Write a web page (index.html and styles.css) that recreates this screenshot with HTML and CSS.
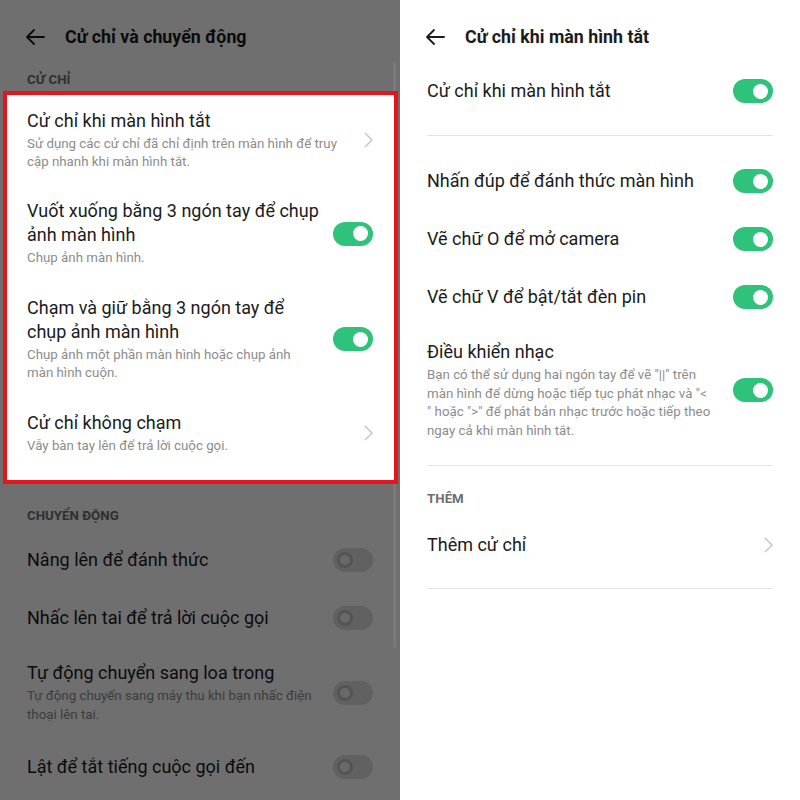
FILE: index.html
```html
<!DOCTYPE html>
<html lang="vi">
<head>
<meta charset="utf-8">
<title>Cử chỉ</title>
<link rel="stylesheet" href="styles.css">
</head>
<body>
<div class="screen">
  <section class="panel left">
    <div class="header">
      <svg class="back" width="20" height="20" viewBox="0 0 20 20"><path d="M19 10H2M9 3L2 10l7 7" fill="none" stroke="#1b1b1b" stroke-width="1.8" stroke-linecap="round" stroke-linejoin="round"/></svg>
      <h1>Cử chỉ và chuyển động</h1>
    </div>
    <div class="label top">CỬ CHỈ</div>
    <div class="box">
      <div class="row multi">
        <div class="text">
          <div class="title">Cử chỉ khi màn hình tắt</div>
          <div class="sub">Sử dụng các cử chỉ đã chỉ định trên màn hình để truy<br>cập nhanh khi màn hình tắt.</div>
        </div>
        <svg class="chev" width="9" height="16" viewBox="0 0 9 16"><path d="M1 1l7 7-7 7" fill="none" stroke="#c6c6c6" stroke-width="1.5"/></svg>
      </div>
      <div class="row multi">
        <div class="text">
          <div class="title">Vuốt xuống bằng 3 ngón tay để chụp<br>ảnh màn hình</div>
          <div class="sub">Chụp ảnh màn hình.</div>
        </div>
        <span class="toggle on"></span>
      </div>
      <div class="row multi">
        <div class="text">
          <div class="title">Chạm và giữ bằng 3 ngón tay để<br>chụp ảnh màn hình</div>
          <div class="sub">Chụp ảnh một phần màn hình hoặc chụp ảnh<br>màn hình cuộn.</div>
        </div>
        <span class="toggle on"></span>
      </div>
      <div class="row multi">
        <div class="text">
          <div class="title">Cử chỉ không chạm</div>
          <div class="sub">Vẫy bàn tay lên để trả lời cuộc gọi.</div>
        </div>
        <svg class="chev" width="9" height="16" viewBox="0 0 9 16"><path d="M1 1l7 7-7 7" fill="none" stroke="#c6c6c6" stroke-width="1.5"/></svg>
      </div>
    </div>
    <div class="label gap">CHUYỂN ĐỘNG</div>
    <div class="row single out">
      <div class="text"><div class="title">Nâng lên để đánh thức</div></div>
      <span class="toggle off"></span>
    </div>
    <div class="row single out">
      <div class="text"><div class="title">Nhấc lên tai để trả lời cuộc gọi</div></div>
      <span class="toggle off"></span>
    </div>
    <div class="row multi out">
      <div class="text">
        <div class="title">Tự động chuyển sang loa trong</div>
        <div class="sub">Tự động chuyển sang máy thu khi bạn nhấc điện<br>thoại lên tai.</div>
      </div>
      <span class="toggle off"></span>
    </div>
    <div class="row single out">
      <div class="text"><div class="title">Lật để tắt tiếng cuộc gọi đến</div></div>
      <span class="toggle off"></span>
    </div>
    <div class="dim"></div>
    <div class="scrollbar"></div>
  </section>

  <section class="panel right">
    <div class="header">
      <svg class="back" width="20" height="20" viewBox="0 0 20 20"><path d="M19 10H2M9 3L2 10l7 7" fill="none" stroke="#1b1b1b" stroke-width="1.8" stroke-linecap="round" stroke-linejoin="round"/></svg>
      <h1>Cử chỉ khi màn hình tắt</h1>
    </div>
    <div class="row single out first">
      <div class="text"><div class="title">Cử chỉ khi màn hình tắt</div></div>
      <span class="toggle on"></span>
    </div>
    <div class="divider d1"></div>
    <div class="row single out">
      <div class="text"><div class="title">Nhấn đúp để đánh thức màn hình</div></div>
      <span class="toggle on"></span>
    </div>
    <div class="row single out">
      <div class="text"><div class="title">Vẽ chữ O để mở camera</div></div>
      <span class="toggle on"></span>
    </div>
    <div class="row single out">
      <div class="text"><div class="title">Vẽ chữ V để bật/tắt đèn pin</div></div>
      <span class="toggle on"></span>
    </div>
    <div class="row multi out">
      <div class="text">
        <div class="title">Điều khiển nhạc</div>
        <div class="sub">Bạn có thể sử dụng hai ngón tay để vẽ "||" trên<br>màn hình để dừng hoặc tiếp tục phát nhạc và "&lt;<br>" hoặc "&gt;" để phát bản nhạc trước hoặc tiếp theo<br>ngay cả khi màn hình tắt.</div>
      </div>
      <span class="toggle on"></span>
    </div>
    <div class="divider d2"></div>
    <div class="label gap2">THÊM</div>
    <div class="row single out">
      <div class="text"><div class="title">Thêm cử chỉ</div></div>
      <svg class="chev" width="9" height="16" viewBox="0 0 9 16"><path d="M1 1l7 7-7 7" fill="none" stroke="#c6c6c6" stroke-width="1.5"/></svg>
    </div>
    <div class="divider d3"></div>
  </section>
</div>
</body>
</html>
```
FILE: styles.css
```css
html, body {
  margin: 0;
  padding: 0;
  background: #ffffff;
}
body {
  font-family: Roboto, "Noto Sans", "Liberation Sans", sans-serif;
  color: #1b1b1b;
}
.screen {
  display: flex;
  width: 800px;
  height: 800px;
  overflow: hidden;
}
.panel {
  width: 400px;
  height: 800px;
  flex: none;
  position: relative;
  background: #ffffff;
  display: flex;
  flex-direction: column;
}
.header {
  display: flex;
  align-items: center;
  height: 54px;
  margin-top: 10px;
  padding-left: 25px;
  flex: none;
}
.back {
  flex: none;
}
.header h1 {
  margin: 0 0 0 20px;
  font-size: 17.8px;
  font-weight: 700;
  color: #1b1b1b;
  line-height: 24px;
}
.label {
  font-size: 13.3px;
  font-weight: 700;
  line-height: 16px;
  color: #6e6e6e;
  margin: 0 27px;
  flex: none;
}
.label.top {
  padding-top: 8px;
  margin-bottom: 3px;
}
.label.gap {
  margin-top: 24px;
  margin-bottom: 7px;
}
.label.gap2 {
  margin-top: 25px;
  margin-bottom: 9px;
}
.box {
  position: relative;
  z-index: 2;
  box-sizing: border-box;
  width: 395px;
  height: 393px;
  margin-left: 3px;
  border: 4px solid #e8141c;
  background: #ffffff;
  padding: 0 21px 0 20px;
  flex: none;
}
.row {
  display: flex;
  align-items: center;
  gap: 10px;
  box-sizing: border-box;
  flex: none;
}
.row.out {
  margin: 0 27px;
}
.row.single {
  min-height: 58px;
}
.row.single.first {
  min-height: 52px;
  margin-top: 1px;
}
.row.multi {
  padding: 14px 0;
}
.box .row.multi {
  padding: 13.5px 0 14px;
}
.text {
  flex: 1;
  min-width: 0;
}
.title {
  font-size: 18px;
  line-height: 24px;
  color: #1b1b1b;
  white-space: nowrap;
}
.sub {
  margin-top: 2px;
  font-size: 13.3px;
  line-height: 18.7px;
  color: #8c8c8c;
  white-space: nowrap;
}
.chev {
  flex: none;
}
.toggle {
  flex: none;
  width: 40px;
  height: 24px;
  border-radius: 12px;
  box-sizing: border-box;
  display: flex;
  align-items: center;
}
.toggle.on {
  background: #2fc27b;
  justify-content: flex-end;
  padding: 0 5px;
}
.toggle.on::after {
  content: "";
  width: 15px;
  height: 15px;
  border-radius: 50%;
  background: #ffffff;
}
.toggle.off {
  background: #dedede;
  justify-content: flex-start;
  padding: 0 4px;
}
.toggle.off::after {
  content: "";
  width: 16px;
  height: 16px;
  box-sizing: border-box;
  border-radius: 50%;
  border: 3px solid #c2c2c2;
  background: #f2f2f2;
}
.divider {
  height: 1px;
  background: #e4e4e4;
  margin: 0 27px;
  flex: none;
}
.divider.d1 {
  margin-top: 18px;
  margin-bottom: 16px;
}
.divider.d2 {
  margin-top: 10px;
}
.divider.d3 {
  margin-top: 14px;
}
.dim {
  position: absolute;
  inset: 0;
  background: rgba(0, 0, 0, 0.565);
  z-index: 1;
}
.scrollbar {
  position: absolute;
  z-index: 1;
  left: 393px;
  top: 62px;
  width: 3px;
  height: 586px;
  border-radius: 2px;
  background: rgba(255, 255, 255, 0.08);
}
```
